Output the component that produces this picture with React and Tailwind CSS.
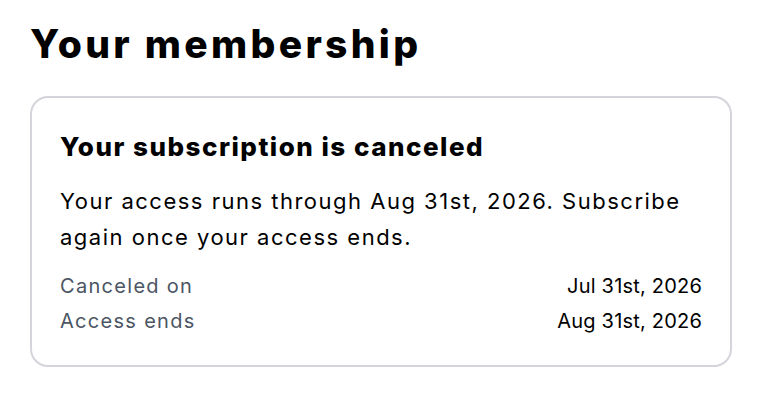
import React from "react";

const rows = [
  { label: "Canceled on", value: "Jul 31st, 2026" },
  { label: "Access ends", value: "Aug 31st, 2026" },
];

export default function App() {
  return (
    <div className="min-h-screen bg-white text-black font-['Inter',sans-serif] pl-[30px] pr-[40px] pt-[22px]">
      <h1 className="text-[39px] font-extrabold leading-[44px] tracking-[3.3px]">Your membership</h1>
      <div className="mt-[30px] border-2 border-[#d4d5db] rounded-[18px] px-[28px] pt-[31px] pb-[26px]">
        <h2 className="text-[26px] font-extrabold leading-[36px] tracking-[1.5px]">Your subscription is canceled</h2>
        <p className="mt-[18px] text-[22px] leading-[36px] tracking-[1.5px]">
          Your access runs through Aug 31st, 2026. Subscribe again once your access ends.
        </p>
        <div className="mt-[14px] flex flex-col">
          {rows.map((r) => (
            <div key={r.label} className="flex justify-between items-center text-[20px] leading-[35px]">
              <span className="text-[#4b5563] tracking-[1.3px]">{r.label}</span>
              <span className="tracking-[0.2px]">{r.value}</span>
            </div>
          ))}
        </div>
      </div>
    </div>
  );
}
